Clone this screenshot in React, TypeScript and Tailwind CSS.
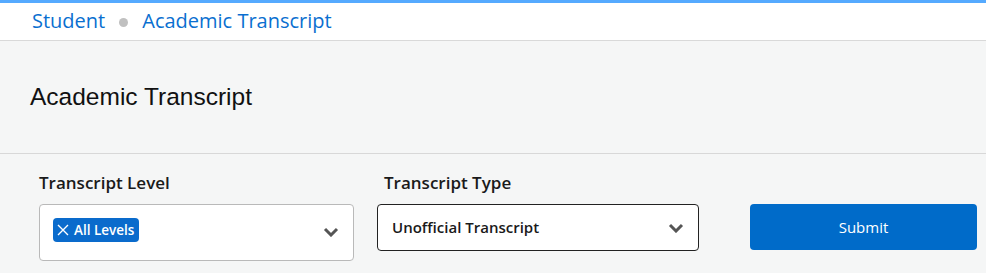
import React from "react";

const Chevron = () => (
  <svg width="16" height="10" viewBox="0 0 16 10" fill="none">
    <path d="M2 2l6 6 6-6" stroke="#555555" strokeWidth="3" strokeLinecap="butt" strokeLinejoin="miter" />
  </svg>
);

export default function App() {
  return (
    <div className="w-[986px] h-[273px] overflow-hidden bg-[#f5f6f6]" style={{ fontFamily: '"Open Sans", sans-serif' }}>
      <div className="h-[3px] bg-[#55aaff]" />
      <div className="h-[38px] bg-white border-b border-[#d9d9d9] flex items-center pl-[32px] pb-[1px]">
        <span className="text-[20px] text-[#0a6fd0] leading-none">Student</span>
        <span className="mx-[14px] w-[9px] h-[9px] rounded-full bg-[#c0c0c0] mt-[2px]" />
        <span className="text-[20px] text-[#0a6fd0] leading-none">Academic Transcript</span>
      </div>
      <div className="h-[113px] border-b border-[#d8d8d8] flex items-center pl-[30px]">
        <h1 className="text-[24.5px] text-[#111] leading-none" style={{ fontFamily: '"Liberation Sans", Arial, sans-serif' }}>
          Academic Transcript
        </h1>
      </div>
      <div className="flex pt-[17px]">
        <div className="ml-[39px] w-[315px]">
          <div className="text-[17px] font-semibold text-[#1a1a1a] leading-[24px] mb-[9px]">Transcript Level</div>
          <div className="h-[57px] bg-white border border-[#b9b9b9] rounded-[4px] flex items-start pl-[13px] pr-[14px] pt-[13px]">
            <span className="h-[24px] bg-[#0a6bcc] rounded-[4px] flex items-center pl-[2px] pr-[5px] text-white text-[13.5px] font-semibold">
              <svg width="16" height="16" viewBox="0 0 16 16" className="mr-[3px]">
                <path d="M3 3l10 10M13 3L3 13" stroke="white" strokeWidth="1.4" />
              </svg>
              All Levels
            </span>
            <span className="ml-auto mt-[9px]"><Chevron /></span>
          </div>
        </div>
        <div className="ml-[23px] w-[322px]">
          <div className="text-[17px] font-semibold text-[#1a1a1a] leading-[24px] mb-[9px] pl-[7px]">Transcript Type</div>
          <div className="h-[47px] bg-white border border-[#222] rounded-[4px] flex items-center pl-[14px] pr-[14px]">
            <span className="text-[15px] font-semibold text-[#1a1a1a]">Unofficial Transcript</span>
            <span className="ml-auto mt-[1px]"><Chevron /></span>
          </div>
        </div>
        <div className="ml-[51px] w-[227px] pt-[33px]">
          <button className="w-full h-[46px] bg-[#006bc9] rounded-[4px] text-white text-[15px] flex items-center justify-center">
            Submit
          </button>
        </div>
      </div>
    </div>
  );
}
